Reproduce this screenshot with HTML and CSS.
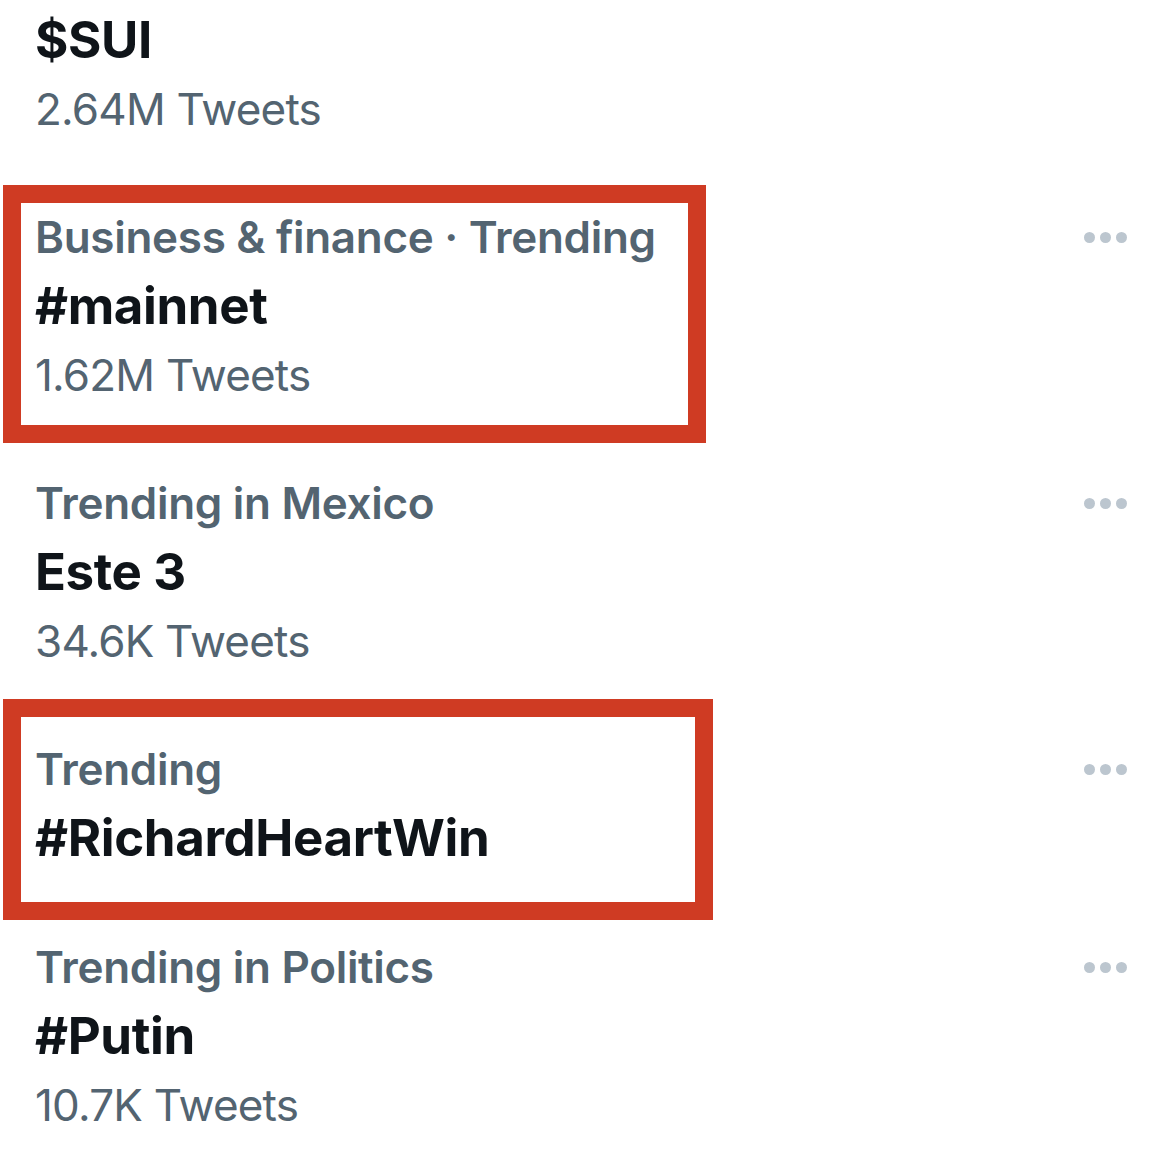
FILE: index.html
```html
<!DOCTYPE html>
<html lang="en">
<head>
<meta charset="utf-8">
<title>Trends</title>
<link rel="stylesheet" href="styles.css">
</head>
<body>
<main class="trends">
  <section class="trend trend-first">
    <div class="trend-body">
      <div class="trend-title">$SUI</div>
      <div class="trend-count">2.64M Tweets</div>
    </div>
  </section>

  <section class="trend">
    <div class="highlight highlight-a"></div>
    <div class="trend-body">
      <div class="trend-cat">Business &amp; finance · Trending</div>
      <div class="trend-title">#mainnet</div>
      <div class="trend-count">1.62M Tweets</div>
    </div>
    <div class="more"><span></span><span></span><span></span></div>
  </section>

  <section class="trend">
    <div class="trend-body">
      <div class="trend-cat">Trending in Mexico</div>
      <div class="trend-title">Este 3</div>
      <div class="trend-count">34.6K Tweets</div>
    </div>
    <div class="more"><span></span><span></span><span></span></div>
  </section>

  <section class="trend">
    <div class="highlight highlight-b"></div>
    <div class="trend-body">
      <div class="trend-cat">Trending</div>
      <div class="trend-title">#RichardHeartWin</div>
    </div>
    <div class="more"><span></span><span></span><span></span></div>
  </section>

  <section class="trend">
    <div class="trend-body">
      <div class="trend-cat">Trending in Politics</div>
      <div class="trend-title">#Putin</div>
      <div class="trend-count">10.7K Tweets</div>
    </div>
    <div class="more"><span></span><span></span><span></span></div>
  </section>
</main>
</body>
</html>
```

FILE: styles.css
```css
* { box-sizing: border-box; }

html, body {
  margin: 0;
  padding: 0;
  background: #ffffff;
}

body {
  font-family: Inter, "Noto Sans", "Liberation Sans", sans-serif;
  -webkit-font-smoothing: antialiased;
}

.trends {
  display: flex;
  flex-direction: column;
  width: 1170px;
}

.trend {
  position: relative;
  display: flex;
  align-items: flex-start;
  padding: 30px 43px 30px 35px;
}

.trend-first {
  padding-top: 5px;
}

.trend-body {
  display: flex;
  flex-direction: column;
  flex: 1;
  position: relative;
  z-index: 1;
}

.trend-cat {
  height: 68px;
  line-height: 68px;
  font-size: 44px;
  font-weight: 600;
  color: #536471;
  letter-spacing: -0.3px;
  white-space: nowrap;
}

.trend-title {
  height: 70px;
  line-height: 70px;
  font-size: 51px;
  font-weight: 700;
  color: #0f1419;
  letter-spacing: -0.4px;
  white-space: nowrap;
}

.trend-count {
  height: 68px;
  line-height: 68px;
  font-size: 44px;
  font-weight: 400;
  color: #536471;
  letter-spacing: -0.8px;
  white-space: nowrap;
}

.more {
  display: flex;
  align-items: center;
  gap: 5px;
  height: 68px;
}

.more span {
  width: 11px;
  height: 11px;
  border-radius: 50%;
  background: #bcc6cf;
}

.highlight {
  position: absolute;
  border: 18px solid #cf3b23;
  pointer-events: none;
}

.highlight-a {
  top: 12px;
  left: 3px;
  width: 703px;
  height: 258px;
}

.highlight-b {
  top: -6px;
  left: 3px;
  width: 710px;
  height: 221px;
}
```
